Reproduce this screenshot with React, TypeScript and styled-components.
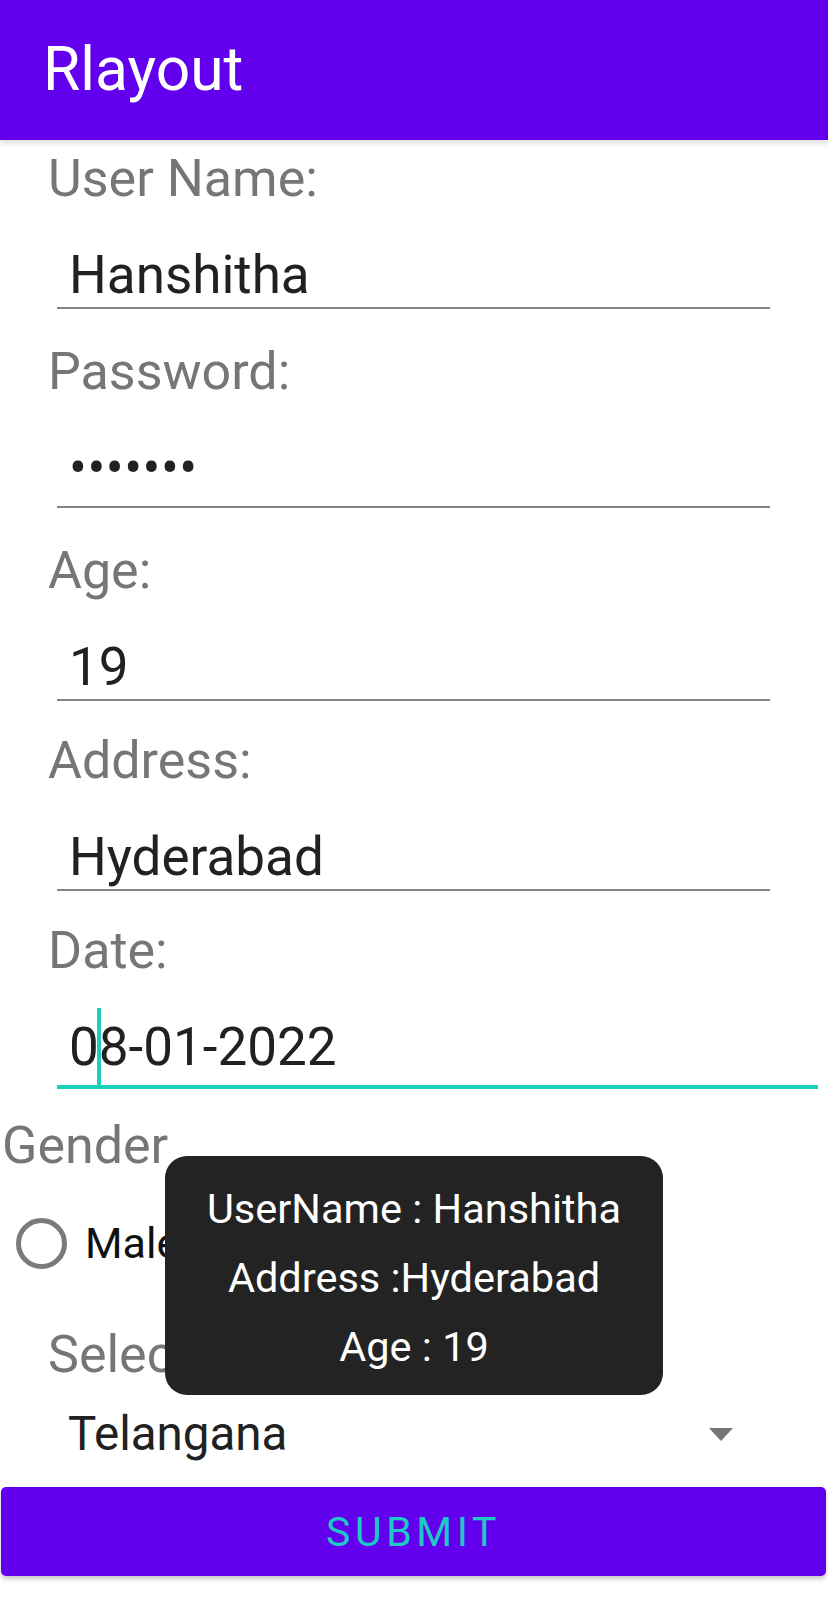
import React from "react";
import styled, { createGlobalStyle } from "styled-components";

const GlobalStyle = createGlobalStyle`
  body {
    margin: 0;
    background: #ffffff;
    font-family: Roboto, "Liberation Sans", sans-serif;
  }
`;

const Screen = styled.div`
  position: relative;
  width: 828px;
  height: 1600px;
  overflow: hidden;
  background: #ffffff;
`;

const AppBar = styled.header`
  position: relative;
  z-index: 1;
  display: flex;
  align-items: center;
  height: 140px;
  padding-left: 43px;
  background: #6200ee;
  box-shadow: 0 3px 6px rgba(0, 0, 0, 0.14);
`;

const Title = styled.h1`
  margin: 0;
  font-size: 60.5px;
  line-height: 60px;
  font-weight: 400;
  color: #ffffff;
`;

const Form = styled.main`
  display: flex;
  flex-direction: column;
  padding-top: 9px;
`;

const Field = styled.div<{ $gap: number }>`
  display: flex;
  flex-direction: column;
  margin-bottom: ${({ $gap }) => $gap}px;
`;

const Label = styled.div<{ $flush?: boolean }>`
  margin-left: ${({ $flush }) => ($flush ? "2px" : "48px")};
  font-size: 52px;
  line-height: 60px;
  color: #767676;
`;

const Input = styled.div<{ $focused?: boolean; $pad: number }>`
  position: relative;
  margin: 36px ${({ $focused }) => ($focused ? "10px" : "58px")} 0 57px;
  padding: 0 0 ${({ $pad }) => $pad}px 12px;
  font-size: 53px;
  line-height: 60px;
  color: #212121;
  border-bottom: ${({ $focused }) => ($focused ? "4px solid #1ccfbf" : "2px solid #858585")};
`;

const Dots = styled.span`
  letter-spacing: 0.5px;
`;

const Caret = styled.span`
  position: absolute;
  left: 40px;
  top: -9px;
  bottom: -4px;
  width: 4px;
  background: #1ccfbf;
`;

const GenderLabel = styled(Label)`
  margin-top: 27px;
`;

const RadioRow = styled.div`
  display: flex;
  align-items: center;
  height: 64px;
  margin-top: 35px;
  padding-left: 16px;
`;

const RadioCircle = styled.span`
  box-sizing: border-box;
  width: 51px;
  height: 51px;
  border-radius: 50%;
  border: 5px solid #7a7a7a;
`;

const RadioText = styled.span`
  margin-left: 18px;
  font-size: 43px;
  line-height: 56px;
  color: #111111;
`;

const SelectLabel = styled(Label)`
  margin-top: 50px;
`;

const Spinner = styled.div`
  display: flex;
  align-items: center;
  justify-content: space-between;
  height: 56px;
  margin-top: 21px;
  padding: 0 95px 0 68px;
`;

const SpinnerValue = styled.span`
  font-size: 47.5px;
  line-height: 56px;
  color: #212121;
`;

const Arrow = styled.span`
  width: 0;
  height: 0;
  border-left: 12.5px solid transparent;
  border-right: 12.5px solid transparent;
  border-top: 13px solid #757575;
`;

const SubmitButton = styled.button`
  display: flex;
  align-items: center;
  justify-content: center;
  height: 89px;
  margin: 25px 2px 0 1px;
  border: none;
  border-radius: 5px;
  background: #6200ee;
  color: #1cc9c4;
  font-family: Roboto, "Liberation Sans", sans-serif;
  font-size: 41px;
  font-weight: 400;
  letter-spacing: 4.6px;
  box-shadow: 0 3px 4px rgba(0, 0, 0, 0.22);
`;

const Toast = styled.div`
  position: absolute;
  z-index: 2;
  left: 165px;
  top: 1156px;
  width: 498px;
  height: 239px;
  box-sizing: border-box;
  padding-top: 18px;
  border-radius: 22px;
  background: #232323;
  color: #ffffff;
  font-size: 41.5px;
  line-height: 69px;
  text-align: center;
`;

const fields = [
  { label: "User Name:", value: "Hanshitha", pad: 2, gap: 33 },
  { label: "Password:", value: "•••••••", secret: true, pad: 8, gap: 33 },
  { label: "Age:", value: "19", pad: 2, gap: 30 },
  { label: "Address:", value: "Hyderabad", pad: 2, gap: 30 },
];

export default function App() {
  return (
    <Screen>
      <GlobalStyle />
      <AppBar>
        <Title>Rlayout</Title>
      </AppBar>
      <Form>
        {fields.map((f) => (
          <Field key={f.label} $gap={f.gap}>
            <Label>{f.label}</Label>
            <Input $pad={f.pad}>{f.secret ? <Dots>{f.value}</Dots> : f.value}</Input>
          </Field>
        ))}
        <Field $gap={0}>
          <Label>Date:</Label>
          <Input $focused $pad={8}>
            08-01-2022
            <Caret />
          </Input>
        </Field>
        <GenderLabel $flush>Gender</GenderLabel>
        <RadioRow>
          <RadioCircle />
          <RadioText>Male</RadioText>
        </RadioRow>
        <SelectLabel>Select State:</SelectLabel>
        <Spinner>
          <SpinnerValue>Telangana</SpinnerValue>
          <Arrow />
        </Spinner>
        <SubmitButton>SUBMIT</SubmitButton>
      </Form>
      <Toast>
        <div>UserName : Hanshitha</div>
        <div>Address :Hyderabad</div>
        <div>Age : 19</div>
      </Toast>
    </Screen>
  );
}
